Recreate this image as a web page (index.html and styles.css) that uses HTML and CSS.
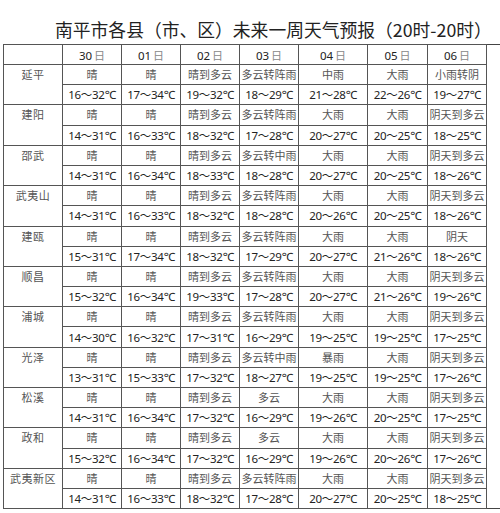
FILE: index.html
```html
<!DOCTYPE html>
<html lang="zh-CN">
<head>
<meta charset="utf-8">
<link rel="stylesheet" href="styles.css">
</head>
<body>
<div class="page">
  <h1 class="title">南平市各县（市、区）未来一周天气预报（20时-20时）</h1>
  <table class="forecast">
    <colgroup>
      <col class="c-city"><col class="c59"><col class="c59"><col class="c59"><col class="c59"><col class="c69"><col class="c60"><col class="c59"><col class="c70">
    </colgroup>
    <thead>
      <tr class="head">
        <th></th>
        <th>30<span class="ri">日</span></th>
        <th>01<span class="ri">日</span></th>
        <th>02<span class="ri">日</span></th>
        <th>03<span class="ri">日</span></th>
        <th>04<span class="ri">日</span></th>
        <th>05<span class="ri">日</span></th>
        <th>06<span class="ri">日</span></th>
      </tr>
    </thead>
    <tbody id="rows"></tbody>
  </table>
</div>
<script src="app.js"></script>
</body>
</html>
```
FILE: app.js
```js
const data = [
  ["延平", ["晴","晴","晴到多云","多云转阵雨","中雨","大雨","小雨转阴"], ["16～32","17～34","19～32","18～29","21～28","22～26","19～27"]],
  ["建阳", ["晴","晴","晴到多云","多云转阵雨","大雨","大雨","阴天到多云"], ["14～31","16～33","18～32","17～28","20～27","20～25","18～25"]],
  ["邵武", ["晴","晴","晴到多云","多云转中雨","大雨","大雨","阴天到多云"], ["14～31","16～34","18～33","18～28","20～27","20～25","18～26"]],
  ["武夷山", ["晴","晴","晴到多云","多云转阵雨","大雨","大雨","阴天到多云"], ["14～31","16～33","18～32","18～28","20～26","20～25","18～26"]],
  ["建瓯", ["晴","晴","晴到多云","多云转阵雨","大雨","大雨","阴天"], ["15～31","17～34","18～32","17～29","20～27","21～26","18～26"]],
  ["顺昌", ["晴","晴","晴到多云","多云转阵雨","大雨","大雨","阴天到多云"], ["15～32","16～34","19～33","17～28","20～27","21～26","19～26"]],
  ["浦城", ["晴","晴","晴到多云","多云转阵雨","大雨","大雨","阴天到多云"], ["14～30","16～32","17～31","16～29","19～25","19～25","17～25"]],
  ["光泽", ["晴","晴","晴到多云","多云转中雨","暴雨","大雨","阴天到多云"], ["13～31","15～33","17～32","18～27","19～25","19～25","17～26"]],
  ["松溪", ["晴","晴","晴到多云","多云","大雨","大雨","阴天到多云"], ["14～31","16～34","17～32","16～29","19～26","20～25","17～25"]],
  ["政和", ["晴","晴","晴到多云","多云","大雨","大雨","阴天到多云"], ["15～32","16～34","17～32","16～29","19～26","20～26","17～26"]],
  ["武夷新区", ["晴","晴","晴到多云","多云转阵雨","大雨","大雨","阴天到多云"], ["14～31","16～33","18～32","17～28","20～27","20～25","18～25"]]
];
const tbody = document.getElementById("rows");
let html = "";
for (const [city, wx, temps] of data) {
  html += '<tr class="wx"><td class="city" rowspan="2">' + city + '</td>' +
    wx.map(w => '<td class="desc">' + w + '</td>').join("") + '</tr>';
  html += '<tr class="tp">' + temps.map(t => '<td class="temp">' + t + '℃</td>').join("") + '</tr>';
}
tbody.innerHTML = html;
```
FILE: styles.css
```css
html, body {
  margin: 0;
  padding: 0;
  background: #fff;
}
.page {
  width: 500px;
  height: 513px;
  overflow: hidden;
}
.title {
  margin: 0;
  height: 44px;
  box-sizing: border-box;
  padding: 18px 0 0 55px;
  font-family: "Noto Sans CJK SC", "Noto Sans", sans-serif;
  font-weight: 400;
  font-size: 17.8px;
  line-height: 22px;
  color: #222;
  white-space: nowrap;
}
.forecast {
  margin-left: 3px;
  border-collapse: collapse;
  table-layout: fixed;
  width: 494px;
  border: 1px solid #444;
}
.c-city { width: 59px; }
.c59 { width: 59px; }
.c60 { width: 60px; }
.c69 { width: 69px; }
.c70 { width: 70px; }
.forecast th,
.forecast td {
  border: 1px solid #555;
  padding: 0;
  text-align: center;
  white-space: nowrap;
  overflow: hidden;
}
.head th {
  height: 19px;
  font-family: "Noto Sans", "Noto Sans CJK SC", sans-serif;
  font-weight: 400;
  font-size: 11.5px;
  color: #222;
}
.ri {
  font-family: "Noto Sans CJK SC", sans-serif;
  color: #888;
  font-size: 11px;
  margin-left: 2px;
}
.wx td, .tp td {
  height: 19.2px;
  line-height: 19px;
}
.city {
  vertical-align: top;
  font-family: "Noto Sans CJK SC", sans-serif;
  font-size: 11px;
  color: #555;
  letter-spacing: 0.5px;
}
.desc {
  font-family: "Noto Sans CJK SC", sans-serif;
  font-size: 11px;
  color: #555;
}
.temp {
  font-family: "Noto Sans", "Noto Sans CJK SC", sans-serif;
  font-size: 11.5px;
  color: #222;
  letter-spacing: -0.3px;
}
```
